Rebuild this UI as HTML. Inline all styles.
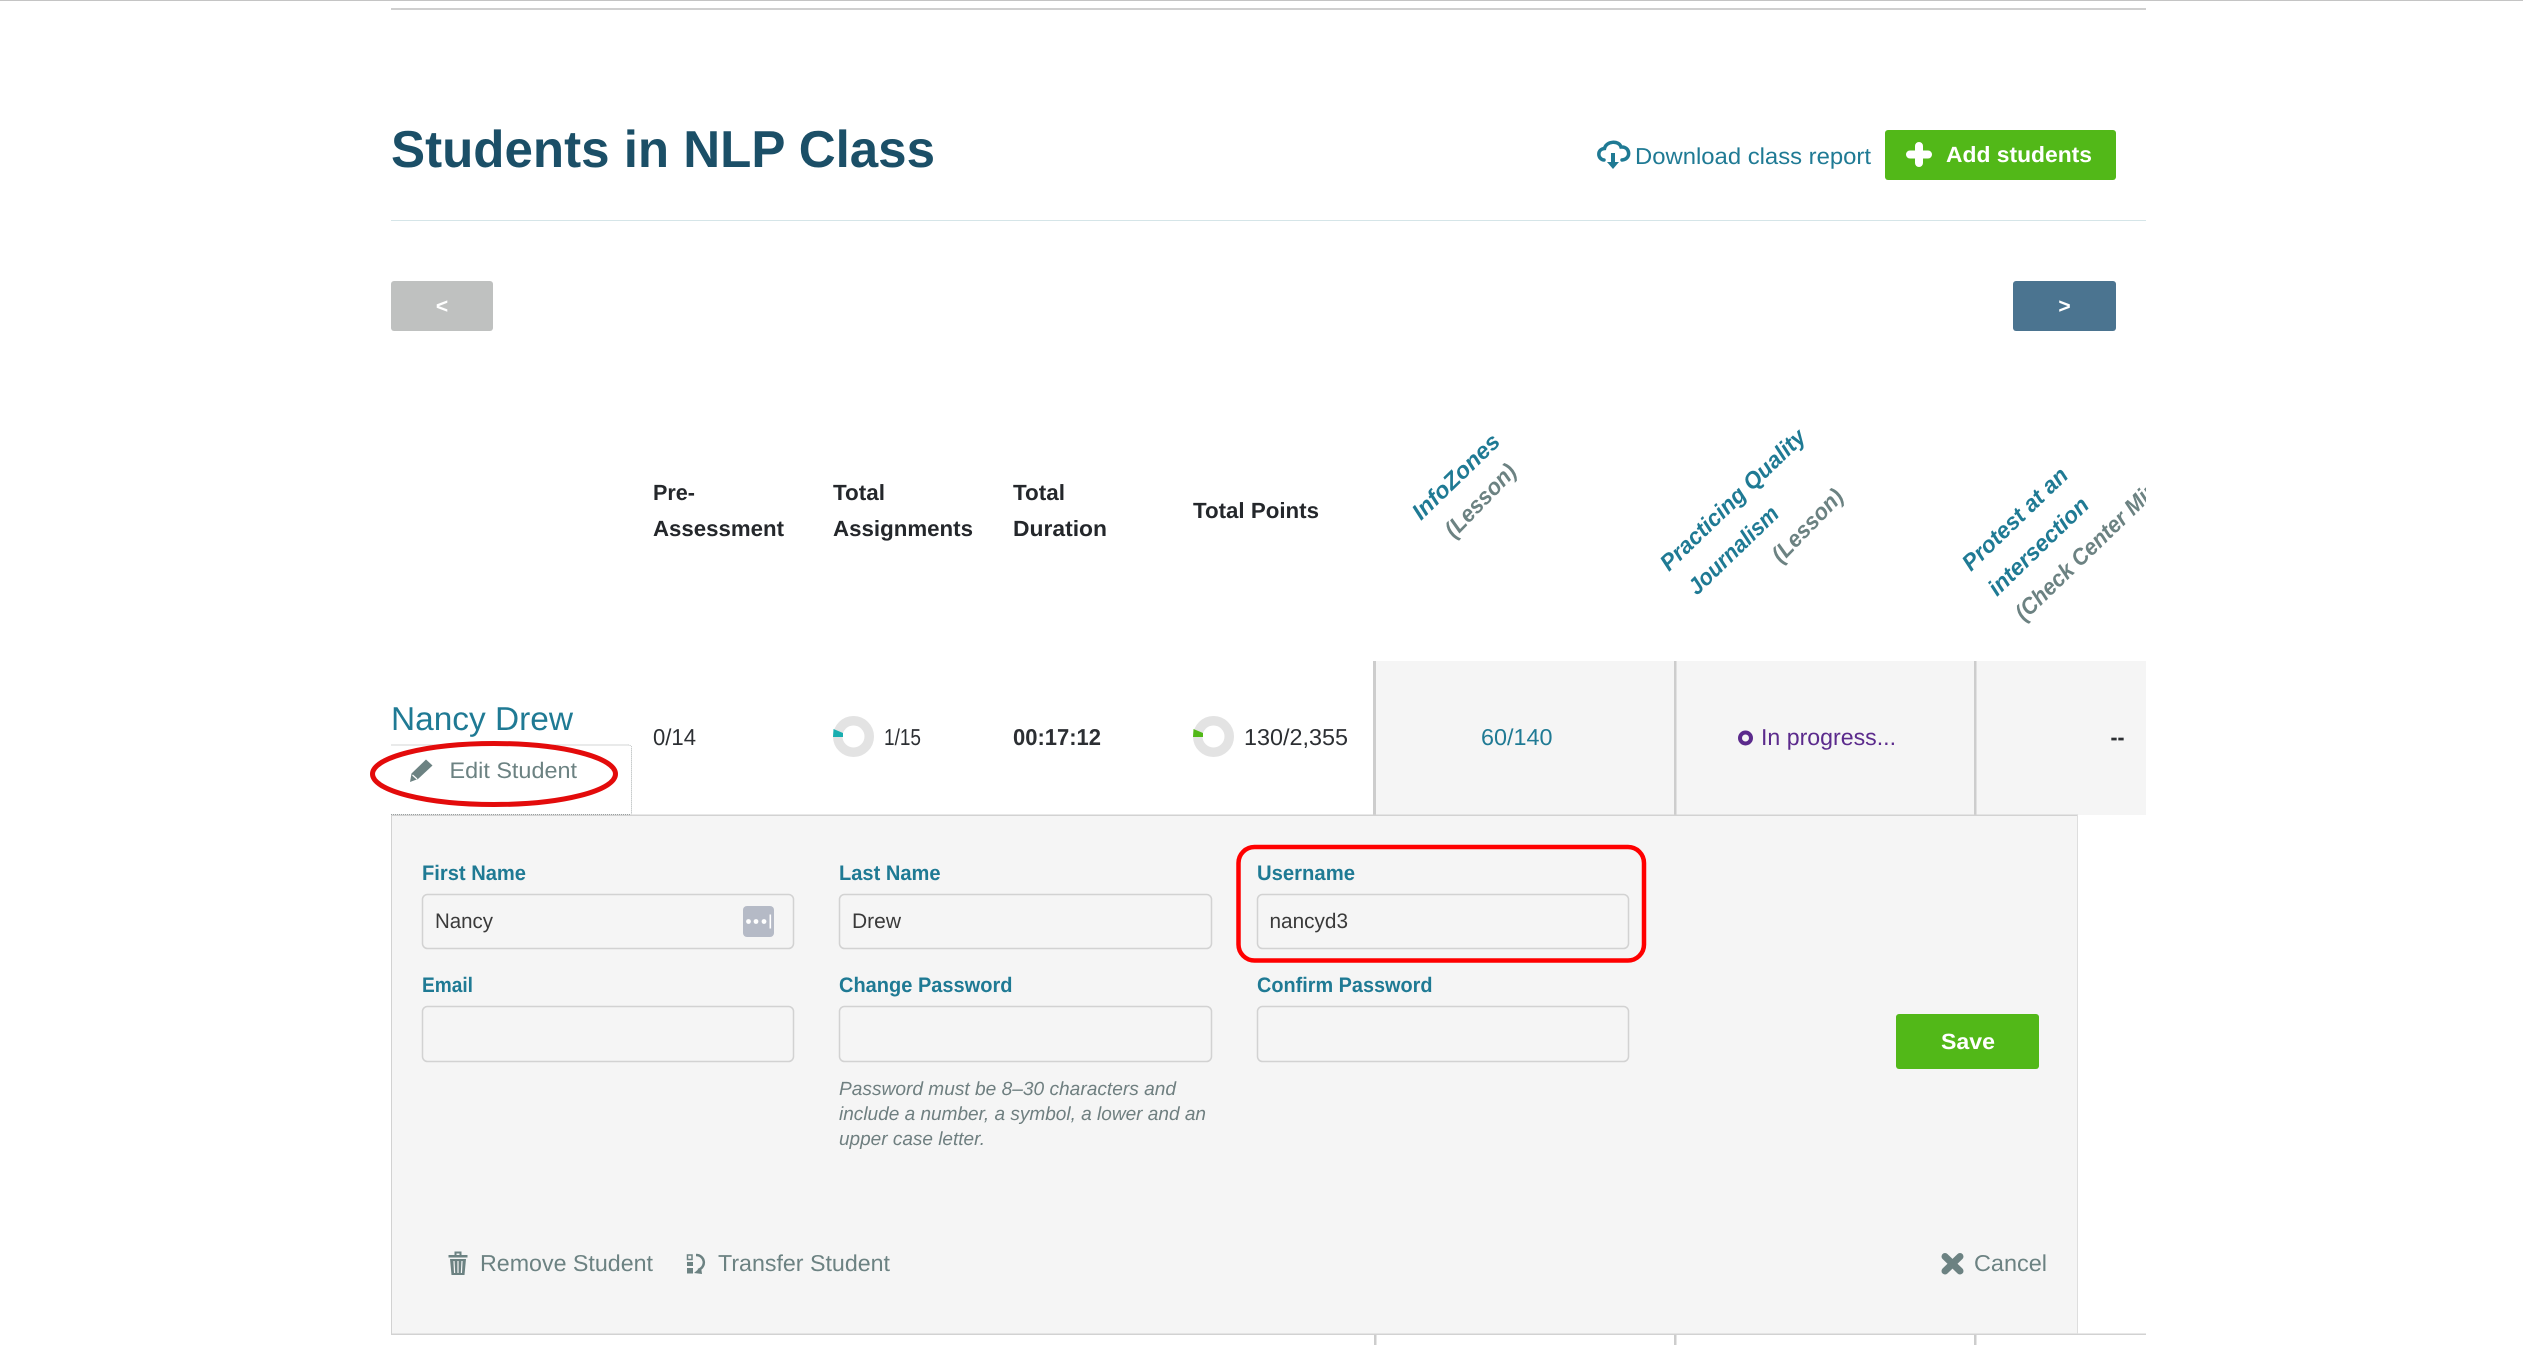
<!DOCTYPE html>
<html>
<head>
<meta charset="utf-8">
<title>Students in NLP Class</title>
<style>
html,body{margin:0;padding:0;background:#fff;width:2523px;height:1345px;overflow:hidden}
svg{display:block;position:absolute;left:0;top:0}
text{font-family:"Liberation Sans",sans-serif;text-rendering:geometricPrecision}
.b{font-weight:700}
.hd{font-weight:700;font-size:22px;fill:#24272b}
.t{fill:#1f7a94}
.g{fill:#6c8282}
.d{fill:#2c2f33}
.lb{font-weight:700;font-size:21px;fill:#1f7a94}
.in{font-size:21px;fill:#3a3a3a}
.hp{font-style:italic;font-size:19px;fill:#6f7f80}
.rt{font-weight:700;font-style:italic;font-size:23px;fill:#1f7a94}
.rg{font-weight:700;font-style:italic;font-size:23px;fill:#6c8282}
</style>
</head>
<body>
<svg width="2523" height="1345" viewBox="0 0 2523 1345" xmlns="http://www.w3.org/2000/svg">
<defs><clipPath id="c"><rect x="1300" y="400" width="846" height="260"/></clipPath></defs>
<rect x="0" y="0" width="2523" height="1" fill="#c4c4c4"/>
<rect x="391" y="8" width="1755" height="2" fill="#cfcfcf"/>

<text x="391" y="167" font-size="52" class="b" fill="#1b4f67" textLength="544" lengthAdjust="spacingAndGlyphs">Students in NLP Class</text>
<rect x="391" y="220" width="1755" height="1" fill="#d5e5e8"/>

<!-- cloud -->
<g fill="none" stroke="#1f7a94" stroke-width="3.500" stroke-linecap="round">
<path d="M1604 160 C1597 159 1597 149 1604.500 148.500 C1606 141 1619 140 1621 147 C1630 146 1632 159 1622 160"/>
</g>
<path d="M1611 153h4v9h4l-6 7-6-7h4z" fill="#1f7a94"/>
<text x="1635" y="164" font-size="23" class="t" textLength="236" lengthAdjust="spacingAndGlyphs">Download class report</text>

<rect x="1885" y="130" width="231" height="50" rx="3" fill="#52b818"/>
<path d="M1919 146v17M1910 154.500h18" stroke="#fff" stroke-width="8" stroke-linecap="round"/>
<text x="1946" y="162" font-size="22" class="b" fill="#fff" textLength="146" lengthAdjust="spacingAndGlyphs">Add students</text>

<rect x="391" y="281" width="102" height="50" rx="3" fill="#bfc1c0"/>
<text x="442" y="313" font-size="21" class="b" fill="#fff" text-anchor="middle">&lt;</text>
<rect x="2013" y="281" width="103" height="50" rx="3" fill="#4b7490"/>
<text x="2064.500" y="313" font-size="21" class="b" fill="#fff" text-anchor="middle">&gt;</text>

<!-- headers -->
<text x="653" y="500" class="hd" textLength="42" lengthAdjust="spacingAndGlyphs">Pre-</text>
<text x="653" y="536" class="hd" textLength="131" lengthAdjust="spacingAndGlyphs">Assessment</text>
<text x="833" y="500" class="hd" textLength="52" lengthAdjust="spacingAndGlyphs">Total</text>
<text x="833" y="536" class="hd" textLength="140" lengthAdjust="spacingAndGlyphs">Assignments</text>
<text x="1013" y="500" class="hd" textLength="52" lengthAdjust="spacingAndGlyphs">Total</text>
<text x="1013" y="536" class="hd" textLength="94" lengthAdjust="spacingAndGlyphs">Duration</text>
<text x="1193" y="518" class="hd" textLength="126" lengthAdjust="spacingAndGlyphs">Total Points</text>

<!-- rotated headers -->
<g clip-path="url(#c)">
<text transform="translate(1421 521) rotate(-44)" class="rt" textLength="112" lengthAdjust="spacingAndGlyphs">InfoZones</text>
<text transform="translate(1454 539) rotate(-46)" class="rg" textLength="92" lengthAdjust="spacingAndGlyphs">(Lesson)</text>
<text transform="translate(1669 572) rotate(-44)" class="rt" textLength="192" lengthAdjust="spacingAndGlyphs">Practicing Quality</text>
<text transform="translate(1697 596) rotate(-44)" class="rt" textLength="116" lengthAdjust="spacingAndGlyphs">Journalism</text>
<text transform="translate(1781 564) rotate(-46)" class="rg" textLength="92" lengthAdjust="spacingAndGlyphs">(Lesson)</text>
<text transform="translate(1971 572) rotate(-44)" class="rt" textLength="137" lengthAdjust="spacingAndGlyphs">Protest at an</text>
<text transform="translate(1997 597) rotate(-44)" class="rt" textLength="130" lengthAdjust="spacingAndGlyphs">intersection</text>
<text transform="translate(2024 622) rotate(-44)" class="rg" textLength="285" lengthAdjust="spacingAndGlyphs">(Check Center Mini-Lesson)</text>
</g>

<!-- row band -->
<rect x="1373" y="661" width="773" height="154" fill="#f5f5f5"/>
<rect x="1373" y="661" width="3" height="154" fill="#cdcdcd"/>
<rect x="1674" y="661" width="2.500" height="154" fill="#cdcdcd"/>
<rect x="1974" y="661" width="2.500" height="154" fill="#cdcdcd"/>

<text x="391" y="730" font-size="33" class="t" textLength="182" lengthAdjust="spacingAndGlyphs">Nancy Drew</text>

<text x="653" y="745" font-size="23" class="d" textLength="43" lengthAdjust="spacingAndGlyphs">0/14</text>

<circle cx="853.500" cy="736.500" r="15.750" fill="none" stroke="#e3e3e3" stroke-width="9.500"/>
<path d="M833 737 L833.500 729 L843 733 L843 737Z" fill="#19aeb0"/>
<text x="884" y="745" font-size="23" class="d" textLength="37" lengthAdjust="spacingAndGlyphs">1/15</text>
<text x="1013" y="745" font-size="23" class="b d" textLength="88" lengthAdjust="spacingAndGlyphs">00:17:12</text>
<circle cx="1213.500" cy="736.500" r="15.750" fill="none" stroke="#e3e3e3" stroke-width="9.500"/>
<path d="M1193 737 L1193.500 729 L1203 733 L1203 737Z" fill="#52b818"/>
<text x="1244" y="745" font-size="23" class="d" textLength="104" lengthAdjust="spacingAndGlyphs">130/2,355</text>

<text x="1481" y="745" font-size="23" class="t" textLength="71.500" lengthAdjust="spacingAndGlyphs">60/140</text>
<circle cx="1745.500" cy="738" r="5.500" fill="none" stroke="#5b2a8c" stroke-width="4"/>
<text x="1761" y="745" font-size="23" fill="#5b2a8c" textLength="135" lengthAdjust="spacingAndGlyphs">In progress...</text>
<text x="2110.500" y="745" font-size="23" class="b d" textLength="14" lengthAdjust="spacingAndGlyphs">--</text>

<!-- form panel -->
<rect x="391" y="815" width="1687" height="520" fill="#f5f5f5"/>
<rect x="391" y="814.500" width="1687" height="1.500" fill="#d2d2d2"/>
<rect x="391" y="1333.500" width="1755" height="1.500" fill="#d2d2d2"/>
<rect x="391" y="815" width="1" height="519" fill="#d2d2d2"/>
<rect x="2077" y="815" width="1" height="519" fill="#dedede"/>
<rect x="1374" y="1335" width="2.500" height="10" fill="#cdcdcd"/>
<rect x="1674" y="1335" width="2.500" height="10" fill="#cdcdcd"/>
<rect x="1974" y="1335" width="2.500" height="10" fill="#cdcdcd"/>

<!-- edit tab -->
<path d="M391.500 745 H628 Q631.500 745 631.500 748 V814.500" fill="#fff" stroke="#a8adad" stroke-width="1" stroke-dasharray="1 1"/>
<rect x="392" y="746" width="239" height="68" fill="#fff"/>
<path d="M391 814.500H631" stroke="#9aa0a0" stroke-width="1" stroke-dasharray="1 1"/>
<path d="M426 759.500 L432.500 765.500 L418 779 L410 782 L411.500 773.500 Z" fill="#6c8282"/>
<path d="M412.500 775 L417 779" stroke="#fff" stroke-width="1.200"/>
<text x="449.500" y="778" font-size="22.500" class="g" textLength="127.500" lengthAdjust="spacingAndGlyphs">Edit Student</text>
<ellipse cx="494" cy="774" rx="121.500" ry="30.500" fill="none" stroke="#e30b0b" stroke-width="5"/>

<!-- labels & inputs -->
<text x="422" y="880" class="lb" textLength="104" lengthAdjust="spacingAndGlyphs">First Name</text>
<text x="839" y="880" class="lb" textLength="101.500" lengthAdjust="spacingAndGlyphs">Last Name</text>
<text x="1257" y="880" class="lb" textLength="98" lengthAdjust="spacingAndGlyphs">Username</text>
<g fill="#f5f5f5" stroke="#d2d2d2" stroke-width="1.500">
<rect x="422.500" y="894.500" width="371" height="54" rx="5"/>
<rect x="839.500" y="894.500" width="372" height="54" rx="5"/>
<rect x="1257.500" y="894.500" width="371" height="54" rx="5"/>
<rect x="422.500" y="1006.500" width="371" height="55" rx="5"/>
<rect x="839.500" y="1006.500" width="372" height="55" rx="5"/>
<rect x="1257.500" y="1006.500" width="371" height="55" rx="5"/>
</g>
<text x="435" y="928" class="in" textLength="58" lengthAdjust="spacingAndGlyphs">Nancy</text>
<text x="852" y="928" class="in" textLength="49" lengthAdjust="spacingAndGlyphs">Drew</text>
<text x="1269.500" y="928" class="in" textLength="78.500" lengthAdjust="spacingAndGlyphs">nancyd3</text>

<rect x="743" y="906" width="31" height="31" rx="4" fill="#b5bac6"/>
<g fill="#fff"><circle cx="748.500" cy="921.500" r="2.400"/><circle cx="756" cy="921.500" r="2.400"/><circle cx="764" cy="921.500" r="2.400"/><rect x="769.500" y="914.500" width="1.600" height="14"/></g>

<text x="422" y="992" class="lb" textLength="51" lengthAdjust="spacingAndGlyphs">Email</text>
<text x="839" y="992" class="lb" textLength="173.500" lengthAdjust="spacingAndGlyphs">Change Password</text>
<text x="1257" y="992" class="lb" textLength="175.500" lengthAdjust="spacingAndGlyphs">Confirm Password</text>

<text x="839" y="1095" class="hp" textLength="337" lengthAdjust="spacingAndGlyphs">Password must be 8–30 characters and</text>
<text x="839" y="1120" class="hp" textLength="367" lengthAdjust="spacingAndGlyphs">include a number, a symbol, a lower and an</text>
<text x="839" y="1145" class="hp" textLength="146" lengthAdjust="spacingAndGlyphs">upper case letter.</text>

<rect x="1896" y="1014" width="143" height="55" rx="3" fill="#52b818"/>
<text x="1941" y="1049" font-size="22" class="b" fill="#fff" textLength="54" lengthAdjust="spacingAndGlyphs">Save</text>

<!-- footer actions -->
<path d="M448.500 1255h19v2.500h-19z M454.500 1255v-3.500h7v3.500h-2v-1.500h-3v1.500z M450 1259h16l-1.500 16h-13z" fill="#6c8282"/>
<path d="M454 1261l.6 12M458 1261v12M462 1261l-.6 12" stroke="#f5f5f5" stroke-width="1.200"/>
<text x="480" y="1271" font-size="23" class="g" textLength="173" lengthAdjust="spacingAndGlyphs">Remove Student</text>

<g fill="none" stroke="#6c8282" stroke-width="2.500">
<rect x="687.500" y="1255" width="4.500" height="4.500" stroke-width="1.500"/>
<path d="M696 1255 C705 1255 707 1267 698 1270"/>
</g>
<rect x="687" y="1262" width="6" height="4" fill="#6c8282"/>
<rect x="687" y="1268" width="6" height="5.500" fill="#6c8282"/>
<path d="M694 1273l7-6 1 7z" fill="#6c8282"/>
<text x="718" y="1271" font-size="23" class="g" textLength="172" lengthAdjust="spacingAndGlyphs">Transfer Student</text>

<path d="M1945 1256.500 L1960 1271 M1960 1256.500 L1945 1271" stroke="#6c8282" stroke-width="7" stroke-linecap="round"/>
<text x="1974" y="1271" font-size="23" class="g" textLength="73" lengthAdjust="spacingAndGlyphs">Cancel</text>

<!-- red highlight -->
<rect x="1238.500" y="847" width="405.500" height="113.500" rx="16" fill="none" stroke="#ff0000" stroke-width="4.500"/>
</svg>
</body>
</html>
